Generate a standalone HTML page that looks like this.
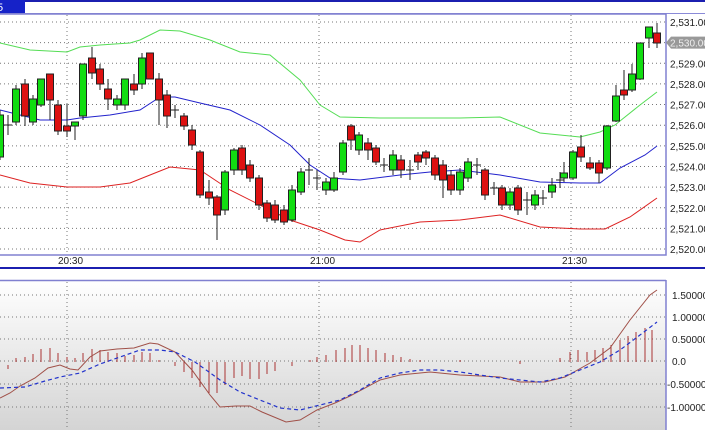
<!DOCTYPE html><html><head><style>
body{margin:0;width:705px;height:430px;overflow:hidden;background:#fff;font-family:"Liberation Sans",sans-serif}
svg{position:absolute;left:0;top:0}
</style></head><body>
<svg width="705" height="430" id="s" xmlns="http://www.w3.org/2000/svg">
<defs><linearGradient id="g" x1="0" y1="0" x2="0" y2="1"><stop offset="0" stop-color="#ffffff"/><stop offset="1" stop-color="#d4d4d4"/></linearGradient></defs>
<rect x="0" y="0" width="705" height="430" fill="#fff"/>
<line x1="0" y1="1" x2="705" y2="1" stroke="#1b1fb0" stroke-width="2"/>
<rect x="0" y="0" width="25" height="14" fill="#1622c8"/>
<text x="-3" y="11" font-size="11" fill="#fff">5</text>
<line x1="0" y1="13.5" x2="705" y2="13.5" stroke="#8a8ad8"/>
<rect x="-1" y="14" width="667" height="241" fill="none" stroke="#8080d0" stroke-width="1.5"/>
<line x1="0" y1="268" x2="705" y2="268" stroke="#1b1fb0" stroke-width="2"/>
<rect x="0" y="280" width="666" height="150" fill="url(#g)"/>
<line x1="0" y1="280.5" x2="666" y2="280.5" stroke="#8080d0" stroke-width="1.5"/>
<line x1="666" y1="280" x2="666" y2="430" stroke="#8080d0" stroke-width="1.5"/>
<g id="grid" stroke="#777" stroke-dasharray="1,3" stroke-width="1"></g>
<g id="c"></g>
<g font-size="10" fill="#222" id="lab"></g>
</svg>
<script>
var s=document.getElementById('c'),gr=document.getElementById('grid'),lb=document.getElementById('lab');
var NS='http://www.w3.org/2000/svg';
function el(p,t,a,txt){var e=document.createElementNS(NS,t);for(var k in a)e.setAttribute(k,a[k]);if(txt)e.textContent=txt;p.appendChild(e);return e;}
function Y(p){return 22+(2531-p)*20.64;}
for(var p=2520;p<=2531;p++){var y=Y(p);el(gr,'line',{x1:0,y1:y,x2:665,y2:y});
 if(p!=2530)el(lb,'text',{x:670,y:y+4},'2,'+(p+'').slice(1)+'.00');}
[67,319,571].forEach(function(x){el(gr,'line',{x1:x,y1:15,x2:x,y2:254});el(gr,'line',{x1:x,y1:282,x2:x,y2:430});});
[['20:30',58],['21:00',310],['21:30',562]].forEach(function(a){el(lb,'text',{x:a[1],y:264},a[0]);});
[[295,'1.50000'],[317,'1.00000'],[339,'0.50000'],[361,'0.0'],[384,'-0.50000'],[407,'-1.00000']].forEach(function(a){el(gr,'line',{x1:0,y1:a[0],x2:665,y2:a[0]});el(lb,'text',{x:a[1][0]=='-'?667:672,y:a[0]+4},a[1]);});
var cur=Y(2530);
el(lb,'polygon',{points:'666,'+cur+' 671,'+(cur-6)+' 705,'+(cur-6)+' 705,'+(cur+6)+' 671,'+(cur+6),fill:'#999'});
el(lb,'text',{x:670,y:cur+4,fill:'#eee'},'2,530.00');
function pl(pts,col,w,d){var a={points:pts,fill:'none',stroke:col,'stroke-width':w||1};if(d)a['stroke-dasharray']=d;el(s,'polyline',a);}
pl('0,43 30,50 67,52 80,47 100,45 130,43 140,40 160,30 180,31 210,40 240,52 270,55 300,80 320,105 340,117 380,118 420,118 460,118 500,117 540,133 580,137 600,132 615,125 640,105 657,92','#55dd55');
pl('0,110 20,115 40,120 67,120 80,118 110,115 140,110 160,97 175,97 200,103 230,110 260,125 290,145 310,165 330,178 360,180 400,175 430,172 460,170 500,175 540,182 580,183 600,183 620,168 645,155 657,146','#2222cc');
pl('0,175 30,183 67,187 100,187 130,183 150,175 170,167 200,170 230,190 260,205 290,220 320,230 345,240 360,242 380,230 420,222 460,220 500,215 540,227 580,229 605,229 630,217 657,198','#dd2222');
// x,color,bt,bb,wt,wb
var C=[[0,'g',115,157,110,160],[8,'x',125,125,115,135],[16,'g',89,122,85,125],[25,'r',84,116,79,126],[33,'g',99,122,95,125],[41,'g',79,105,79,107],[50,'r',74,100,74,120],[58,'r',105,131,100,135],[67,'r',126,131,104,137],[75,'g',122,126,122,140],[83,'g',64,116,64,120],[92,'r',58,73,47,79],[100,'r',69,84,64,90],[108,'r',89,99,79,110],[117,'g',99,105,95,110],[125,'g',79,105,79,110],[134,'r',84,90,74,95],[142,'g',58,84,53,89],[150,'r',53,79,53,79],[159,'r',79,100,73,125],[167,'r',95,116,90,128],[175,'x',110,110,105,118],[184,'r',116,126,113,130],[192,'r',130,145,125,150],[200,'r',152,195,150,198],[209,'r',192,198,180,205],[217,'r',197,215,195,240],[225,'g',172,210,170,215],[234,'g',150,170,148,175],[242,'r',148,170,145,175],[250,'r',165,178,160,182],[259,'r',178,205,175,210],[267,'r',203,218,200,222],[275,'r',205,220,200,223],[284,'r',210,222,205,225],[292,'g',190,220,185,222],[301,'g',172,192,168,195],[309,'x',170,170,158,185],[317,'x',178,178,170,190],[326,'g',182,190,178,195],[334,'g',178,190,172,192],[343,'g',143,172,140,175],[351,'r',126,140,124,150],[359,'g',135,150,132,155],[368,'r',143,150,138,160],[376,'r',148,162,145,165],[384,'x',165,165,158,172],[393,'g',155,170,150,175],[401,'r',160,170,155,178],[410,'x',170,170,160,180],[418,'r',155,162,152,170],[426,'r',152,158,150,165],[435,'r',158,175,155,180],[443,'r',165,180,160,198],[451,'r',175,190,170,195],[460,'g',172,190,168,195],[468,'g',162,178,158,182],[477,'x',165,165,158,175],[485,'r',170,195,168,200],[494,'x',188,188,182,195],[502,'r',188,205,185,210],[510,'g',192,205,188,210],[518,'r',188,210,185,215],[527,'x',200,200,192,215],[535,'g',195,205,190,210],[543,'x',198,198,190,205],[552,'g',185,192,178,198],[560,'x',180,180,172,188],[564,'g',173,178,162,182],[573,'g',152,178,150,180],[581,'r',147,157,135,162],[590,'r',163,168,157,170],[599,'r',163,173,160,183],[607,'g',126,168,125,170],[616,'g',96,121,85,122],[624,'r',90,95,70,100],[632,'g',74,90,64,92],[640,'g',43,79,43,80],[649,'g',27,38,27,48],[657,'r',33,43,23,48]];
C.forEach(function(c){var x=c[0];el(s,'line',{x1:x,y1:c[4],x2:x,y2:c[5],stroke:'#222'});
 if(c[1]=='x'){el(s,'line',{x1:x-4,y1:c[2],x2:x+4,y2:c[2],stroke:'#222'});}
 else el(s,'rect',{x:x-3.5,y:c[2],width:7,height:Math.max(c[3]-c[2],3),fill:c[1]=='g'?'#11dd11':'#dd1111',stroke:'#222'});});
// histogram
var H=[[8,365,369],[16,358,362],[25,357,362],[33,354,362],[41,349,362],[50,348,362],[58,353,362],[67,357,362],[75,358,362],[83,353,362],[92,349,362],[100,350,362],[108,352,362],[117,353,362],[125,356,362],[134,355,362],[142,352,362],[150,353,362],[159,360,362],[175,362,366],[184,362,372],[192,362,378],[200,362,387],[209,362,393],[217,362,393],[225,362,385],[234,362,378],[242,362,376],[250,362,379],[259,362,379],[267,362,374],[275,362,371],[292,362,366],[310,360,362],[317,357,362],[326,355,362],[336,350,362],[345,348,362],[352,345,362],[360,345,362],[368,348,362],[376,350,362],[385,353,362],[393,355,362],[401,357,362],[410,359,362],[420,360,362],[460,360,362],[520,361,364],[560,358,362],[570,352,362],[578,350,362],[587,352,362],[595,350,362],[603,348,362],[611,345,362],[620,340,362],[628,336,362],[636,332,362],[645,328,362],[652,330,362]];
H.forEach(function(h){el(s,'line',{x1:h[0],y1:h[1],x2:h[0],y2:h[2],stroke:'#aa3333'});});
pl('0,398 10,393 20,386 35,378 48,368 60,365 70,369 78,370 90,357 100,351 117,349 134,348 150,343 158,344 175,352 192,370 210,395 220,407 236,406 250,406 262,412 286,422 300,420 317,410 335,403 350,396 380,380 400,375 430,372 460,375 500,377 520,382 545,382 565,377 590,363 610,348 630,320 650,295 657,290','#a05048');
pl('0,388 25,387 45,381 60,377 80,373 100,364 120,357 140,350 160,350 175,352 195,362 220,380 240,392 260,400 280,408 300,410 320,405 340,400 360,390 380,378 400,373 420,370 440,370 460,372 480,375 500,378 520,380 540,382 560,378 580,370 600,362 620,350 640,335 657,322','#2233cc',1.2,'4,3');
</script>
</body></html>
